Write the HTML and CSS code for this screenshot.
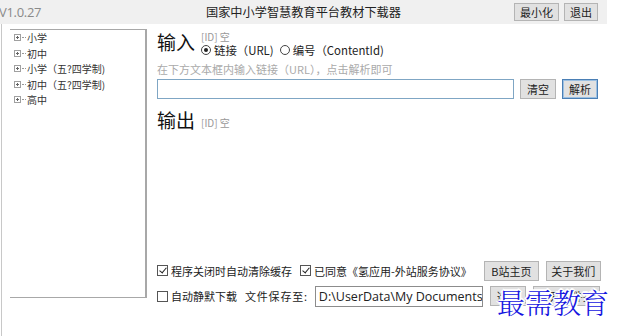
FILE: index.html
```html
<!DOCTYPE html>
<html lang="zh">
<head>
<meta charset="utf-8">
<link rel="stylesheet" href="styles.css">
</head>
<body>
<div class="window">
  <div class="titlebar">
    <div class="version">V1.0.27</div>
    <div class="title">国家中小学智慧教育平台教材下载器</div>
    <div class="tbtns">
      <button class="btn">最小化</button>
      <button class="btn">退出</button>
    </div>
  </div>
  <div class="main">
    <div class="tree">
      <div class="node"><span class="plus"></span><span class="dots"></span>小学</div>
      <div class="node"><span class="plus"></span><span class="dots"></span>初中</div>
      <div class="node"><span class="plus"></span><span class="dots"></span>小学（五?四学制)</div>
      <div class="node"><span class="plus"></span><span class="dots"></span>初中（五?四学制)</div>
      <div class="node"><span class="plus"></span><span class="dots"></span>高中</div>
    </div>
    <div class="content">
      <div class="section">
        <div class="big">输入</div>
        <div class="side">
          <div class="idlabel">[ID] 空</div>
          <div class="radios">
            <span class="radio on"></span><span>链接（URL)</span>
            <span class="radio"></span><span>编号（ContentId)</span>
          </div>
        </div>
      </div>
      <div class="hint">在下方文本框内输入链接（URL），点击解析即可</div>
      <div class="inrow">
        <div class="urlbox"></div>
        <button class="btn b2">清空</button>
        <button class="btn b2 primary">解析</button>
      </div>
      <div class="section out">
        <div class="big">输出</div>
        <div class="idlabel low">[ID] 空</div>
      </div>
      <div class="spacer"></div>
      <div class="row r1">
        <span class="chk on"></span><span class="lbl">程序关闭时自动清除缓存</span>
        <span class="chk on gap"></span><span class="lbl">已同意《氢应用-外站服务协议》</span>
        <button class="btn b3 first">B站主页</button>
        <button class="btn b3">关于我们</button>
      </div>
      <div class="row r2">
        <span class="chk"></span><span class="lbl">自动静默下载</span>
        <span class="lbl save">文件保存至:</span>
        <div class="pathbox">D:\UserData\My Documents</div>
        <button class="btn b4">选择</button>
        <button class="btn b5">打开文件夹</button>
      </div>
    </div>
  </div>
  <div class="watermark">最需教育</div>
</div>
</body>
</html>
```

FILE: styles.css
```css
* { box-sizing: border-box; }
html, body { margin: 0; padding: 0; }
body {
  width: 620px;
  height: 336px;
  overflow: hidden;
  background: #fff;
  font-family: "Noto Sans CJK SC", "Noto Sans", sans-serif;
  color: #222;
}
.window {
  position: relative;
  width: 620px;
  height: 336px;
}
.titlebar {
  width: 607px;
  height: 24px;
  background: #f0f0f0;
  display: grid;
  grid-template-columns: 1fr auto 1fr;
  align-items: center;
}
.version {
  font-family: "Open Sans", "Noto Sans", sans-serif;
  font-size: 13px;
  color: #8a8a8a;
  margin-left: -1px;
  letter-spacing: -0.3px;
}
.title {
  font-size: 12.2px;
  color: #222;
}
.tbtns {
  display: flex;
  justify-content: flex-end;
  gap: 5px;
  padding-right: 9px;
}
.btn {
  font-family: "Noto Sans CJK SC", sans-serif;
  font-size: 11px;
  color: #222;
  background: #e1e1e1;
  border: 1px solid #b4b4b4;
  padding: 0 5px;
  height: 18px;
  line-height: 16px;
  margin: 0;
}
.main {
  display: flex;
  height: 312px;
  border-left: 1px solid #c8c8c8;
  margin-left: 1px;
}
.tree {
  flex: none;
  margin-left: 8px;
  margin-top: 5px;
  width: 137px;
  height: 269px;
  border-top: 1px solid #a8a8a8;
  border-right: 2px solid #a8a8a8;
  border-bottom: 1px solid #a8a8a8;
  padding-top: 0;
  padding-left: 4px;
}
.node {
  display: flex;
  align-items: center;
  height: 15.5px;
  font-size: 10px;
  color: #333;
}
.plus {
  width: 7px;
  height: 7px;
  border: 1px solid #a0a0a0;
  position: relative;
  margin-right: 1px;
  flex: none;
}
.plus::before {
  content: "";
  position: absolute;
  left: 1px; top: 2px;
  width: 3px; height: 1px;
  background: #666;
}
.plus::after {
  content: "";
  position: absolute;
  left: 2px; top: 1px;
  width: 1px; height: 3px;
  background: #666;
}
.dots {
  width: 4px;
  border-top: 1px dotted #999;
  margin-right: 1px;
  flex: none;
}
.content {
  flex: 1;
  min-width: 0;
  display: flex;
  flex-direction: column;
  padding-left: 10px;
  padding-bottom: 29px;
}
.section {
  display: flex;
  align-items: flex-start;
  margin-top: 5px;
}
.big {
  font-size: 19px;
  line-height: 26px;
  color: #111;
  width: 44px;
}
.side {
  display: flex;
  flex-direction: column;
}
.idlabel {
  font-size: 10px;
  color: #999;
  line-height: 13px;
  margin-top: 1px;
}
.idlabel.low { margin-top: 9px; }
.radios {
  display: flex;
  align-items: center;
  font-size: 11.4px;
  line-height: 14px;
  color: #222;
}
.radio {
  width: 10px;
  height: 10px;
  border: 1px solid #444;
  border-radius: 50%;
  margin-right: 3px;
  position: relative;
}
.radio.on::after {
  content: "";
  position: absolute;
  left: 2px; top: 2px;
  width: 4px; height: 4px;
  border-radius: 50%;
  background: #222;
}
.radios .radio:nth-of-type(3) { margin-left: 6px; }
.hint {
  font-size: 11px;
  color: #aaa;
  line-height: 14px;
  margin-top: 5px;
}
.inrow {
  display: flex;
  align-items: center;
  margin-top: 3px;
}
.urlbox {
  width: 357px;
  height: 20px;
  border: 1px solid #7fa6c4;
  background: #fff;
}
.b2 {
  height: 20px;
  width: 36px;
  margin-left: 6px;
  padding: 0;
}
.b2.primary {
  border: 1px solid #4a7fb5;
  box-shadow: inset 0 0 0 1px #9cc0e2;
}
.out { margin-top: 8px; }
.spacer { flex: 1; }
.row {
  display: flex;
  align-items: center;
  font-size: 11px;
  color: #222;
}
.r1 { height: 21px; }
.r2 { height: 22px; margin-top: 4px; }
.chk {
  width: 11px;
  height: 11px;
  border: 1px solid #555;
  margin-right: 3px;
  position: relative;
  flex: none;
}
.chk.on::after {
  content: "";
  position: absolute;
  left: 3px; top: 0px;
  width: 3px; height: 6px;
  border-right: 1px solid #222;
  border-bottom: 1px solid #222;
  transform: rotate(40deg);
}
.chk.gap { margin-left: 8px; }
.lbl { white-space: nowrap; }
.save { margin-left: 8px; letter-spacing: 0.8px; }
.b3 {
  height: 20px;
  width: 55px;
  padding: 0;
  margin-left: 7px;
  flex: none;
}
.b3.first { margin-left: 12px; }
.pathbox {
  margin-left: 7px;
  width: 168px;
  height: 21px;
  border: 1px solid #8c8c8c;
  font-family: "Open Sans", "Noto Sans", sans-serif;
  font-size: 12.5px;
  line-height: 19px;
  padding-left: 3px;
  white-space: nowrap;
  overflow: hidden;
  flex: none;
}
.b4 {
  height: 20px;
  width: 36px;
  margin-left: 7px;
  padding: 0;
  flex: none;
}
.b5 {
  height: 20px;
  width: 67px;
  margin-left: 7px;
  padding: 0;
  flex: none;
}
.watermark {
  position: absolute;
  left: 497px;
  top: 285px;
  font-family: "Noto Serif CJK SC", "Noto Sans CJK SC", serif;
  font-size: 28px;
  line-height: 34px;
  color: #1515e0;
  letter-spacing: 0;
  text-shadow: 2px 0 0 #fff, -2px 0 0 #fff, 0 2px 0 #fff, 0 -2px 0 #fff, 1px 1px 0 #fff, -1px -1px 0 #fff, 1px -1px 0 #fff, -1px 1px 0 #fff;
  font-weight: 300;
}
```
